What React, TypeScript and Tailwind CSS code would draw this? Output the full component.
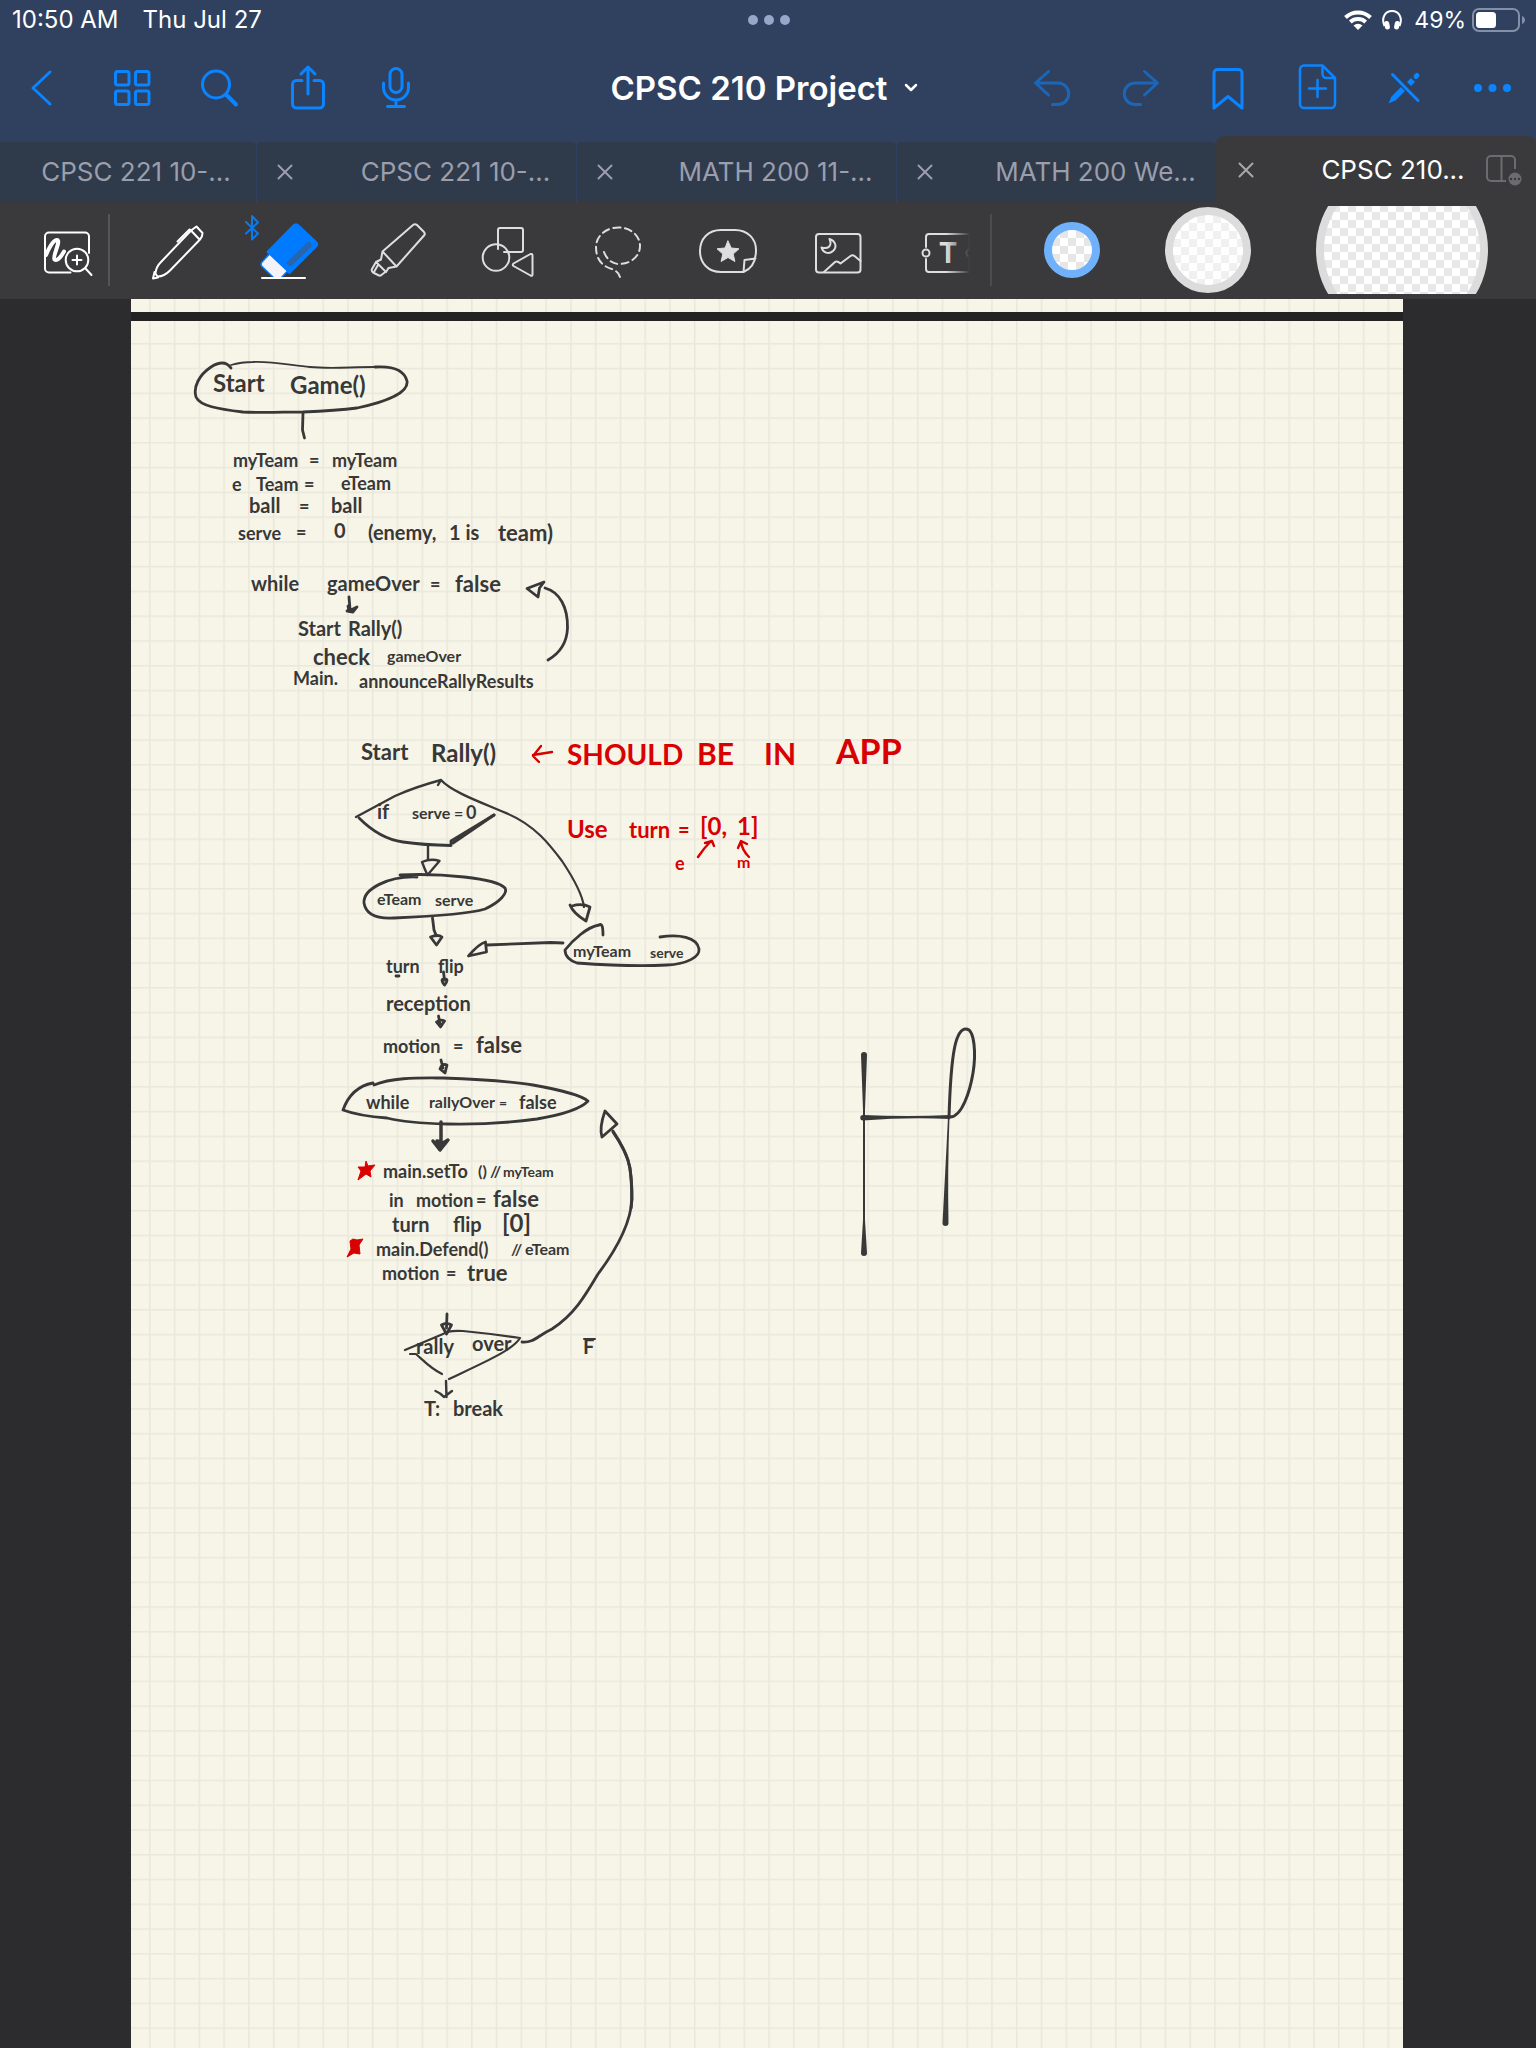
import React from 'react';

type IconProps = { children: React.ReactNode; width?: number };

function BarIcon({ children, width = 3 }: IconProps) {
  return (
    <svg
      viewBox="0 0 48 48"
      className="size-12"
      fill="none"
      stroke="currentColor"
      strokeWidth={width}
      strokeLinecap="round"
      strokeLinejoin="round"
      aria-hidden="true"
    >
      {children}
    </svg>
  );
}

function BarButton({ label, dim, children }: { label: string; dim?: boolean; children: React.ReactNode }) {
  return (
    <button
      type="button"
      aria-label={label}
      className={
        dim
          ? 'flex h-24 w-[88px] items-center justify-center text-[#1c66b8]'
          : 'flex h-24 w-[88px] items-center justify-center text-[#0a84ff]'
      }
    >
      {children}
    </button>
  );
}

function Tool({ label, bright, children }: { label: string; bright?: boolean; children: React.ReactNode }) {
  return (
    <button
      type="button"
      aria-label={label}
      className={
        bright
          ? 'flex w-[110px] shrink-0 items-center justify-center text-white'
          : 'flex w-[110px] shrink-0 items-center justify-center text-[#dedede]'
      }
    >
      <svg
        viewBox="0 0 64 64"
        className="size-16 overflow-visible"
        fill="none"
        stroke="currentColor"
        strokeWidth={2}
        strokeLinecap="round"
        strokeLinejoin="round"
        aria-hidden="true"
      >
        {children}
      </svg>
    </button>
  );
}

function StatusBar() {
  return (
    <div className="grid h-10 grid-cols-[1fr_auto_1fr] items-center pr-2.5 pl-3 text-2xl leading-7 text-white">
      <div className="flex gap-6">
        <span>10:50 AM</span>
        <span>Thu Jul 27</span>
      </div>
      <button type="button" aria-label="Multitasking" className="flex gap-1.5">
        <span className="size-2.5 rounded-full bg-[#97a7ca]" />
        <span className="size-2.5 rounded-full bg-[#97a7ca]" />
        <span className="size-2.5 rounded-full bg-[#97a7ca]" />
      </button>
      <div className="flex items-center justify-end">
        <svg viewBox="0 0 28 20" className="mr-2.5 h-5 w-7" fill="none" stroke="white" strokeWidth={4} aria-label="Wi-Fi">
          <path d="M1.5 7.5a18 18 0 0 1 25 0M6.300 12a11.500 11.500 0 0 1 15.400 0" />
          <path d="M14 20l-4.500-4.500a6.500 6.500 0 0 1 9 0Z" fill="white" stroke="none" />
        </svg>
        <svg viewBox="0 0 20 20" className="mr-3 size-5" fill="none" stroke="white" strokeWidth={2} aria-label="Headphones">
          <path d="M2.500 16C-1 8 3 1 10 1s11 7 7.500 15" />
          <rect x="2.500" y="11" width="5" height="8.500" rx="2.500" fill="white" stroke="none" transform="rotate(-12 5 15)" />
          <rect x="12.500" y="11" width="5" height="8.500" rx="2.500" fill="white" stroke="none" transform="rotate(12 15 15)" />
        </svg>
        <span className="mr-1.5 text-[23px]">49%</span>
        <svg viewBox="0 0 54 24" className="h-6 w-[54px]" aria-label="Battery">
          <rect x="1" y="1" width="46" height="22" rx="6" fill="none" stroke="#8390a8" strokeWidth={2} />
          <rect x="4" y="4" width="20" height="16" rx="3.500" fill="white" />
          <path d="M50 8c4 1.500 4 6.500 0 8Z" fill="#8390a8" />
        </svg>
      </div>
    </div>
  );
}

function NavBar() {
  return (
    <div className="grid h-24 grid-cols-[1fr_auto_1fr] items-center">
      <div className="flex">
        <BarButton label="Back">
          <BarIcon>
            <path d="M30 8 13 24l17 16" />
          </BarIcon>
        </BarButton>
        <BarButton label="Pages">
          <BarIcon>
            <rect x="7.500" y="7.500" width="13.500" height="13.500" rx="2" />
            <rect x="27.500" y="7.500" width="13.500" height="13.500" rx="2" />
            <rect x="7.500" y="27" width="13.500" height="13.500" rx="2" />
            <rect x="27.500" y="27" width="13.500" height="13.500" rx="2" />
          </BarIcon>
        </BarButton>
        <BarButton label="Search">
          <BarIcon>
            <circle cx="20" cy="20.500" r="13.500" />
            <path d="m30.500 31 9.500 9.500" strokeWidth={4} />
          </BarIcon>
        </BarButton>
        <BarButton label="Share">
          <BarIcon>
            <path d="M18 16.500h-5.500a4 4 0 0 0-4 4V40a4 4 0 0 0 4 4h23a4 4 0 0 0 4-4V20.500a4 4 0 0 0-4-4H30M24 30V3.500M17 10l7-7 7 7" />
          </BarIcon>
        </BarButton>
        <BarButton label="Record">
          <BarIcon>
            <rect x="18" y="4.500" width="12" height="24" rx="6" />
            <path d="M11.500 19v4.500a12.500 12.500 0 0 0 25 0V19M24 36.500v6M15.500 42.500h17" />
          </BarIcon>
        </BarButton>
      </div>
      <h1>
        <button type="button" className="mr-2 flex items-center gap-4 text-[33px] leading-10 font-semibold text-white">
          <span className="whitespace-nowrap">CPSC 210 Project</span>
          <svg viewBox="0 0 14 10" className="h-2.5 w-3.5" fill="none" stroke="white" strokeWidth={2.500} strokeLinecap="round" strokeLinejoin="round" aria-hidden="true">
            <path d="m2 2 5 5 5-5" />
          </svg>
        </button>
      </h1>
      <div className="flex justify-end">
        <BarButton label="Undo" dim>
          <BarIcon>
            <path d="M20.500 7.500 7.500 19l13 12M7.500 19H30a10.700 10.700 0 0 1 0 21.500h-5.500" />
          </BarIcon>
        </BarButton>
        <BarButton label="Redo" dim>
          <BarIcon>
            <path d="M28.500 7.500 41.500 19l-13 12M41.500 19H19a10.700 10.700 0 0 0 0 21.500h5.500" />
          </BarIcon>
        </BarButton>
        <BarButton label="Bookmark">
          <BarIcon>
            <path d="M10 44V9a3.500 3.500 0 0 1 3.500-3.500h21A3.500 3.500 0 0 1 38 9v35L24 32.500Z" />
          </BarIcon>
        </BarButton>
        <BarButton label="Add page">
          <BarIcon width={2.500}>
            <path d="M30.500 1.500H12a4 4 0 0 0-4 4V40a4 4 0 0 0 4 4h27a4 4 0 0 0 4-4V14Zm0 0V10a4 4 0 0 0 4 4H43M25.500 16v17M17 24.500h17" />
          </BarIcon>
        </BarButton>
        <BarButton label="Toggle read only">
          <BarIcon>
            <path d="m12.500 10.500 25.500 26" />
            <path d="m8.500 39.500 3-7 9.500-9.500 4 4-9.500 9.500ZM27 18l4-4 4 4-4 4Z" fill="currentColor" stroke="none" />
            <path d="m36 12.500 1-1" strokeWidth={5} />
          </BarIcon>
        </BarButton>
        <BarButton label="More">
          <BarIcon>
            <g fill="currentColor" stroke="none">
              <circle cx="10" cy="24" r="4" />
              <circle cx="24.500" cy="24" r="4" />
              <circle cx="39" cy="24" r="4" />
            </g>
          </BarIcon>
        </BarButton>
      </div>
    </div>
  );
}

function CloseIcon() {
  return (
    <svg viewBox="0 0 16 16" className="size-4" stroke="currentColor" strokeWidth={2} strokeLinecap="round" aria-hidden="true">
      <path d="m1.500 1.500 13 13m0-13-13 13" />
    </svg>
  );
}

function Tab({ title }: { title: string }) {
  return (
    <div className="mt-1.5 flex h-[60px] min-w-0 items-center rounded-t border-l border-[#30405f] bg-[#2f3a4b] text-[#9a9ead]">
      <button type="button" aria-label={'Close ' + title} className="ml-[18px] flex h-8 w-5 items-center justify-center">
        <CloseIcon />
      </button>
      <button type="button" className="min-w-0 flex-1 pl-10 text-center text-[26px] leading-8 whitespace-nowrap">
        {title}
      </button>
    </div>
  );
}

function TabBar() {
  return (
    <nav aria-label="Open documents" className="grid grid-cols-[4fr_5fr_5fr_5fr_5fr] bg-[#30405f]">
      <div className="mt-1.5 flex h-[60px] min-w-0 items-center justify-center rounded-tr bg-[#2f3a4b] text-[#9a9ead]">
        <button type="button" className="pl-4 text-[26px] leading-8 whitespace-nowrap">
          CPSC 221 10-...
        </button>
      </div>
      <Tab title="CPSC 221 10-..." />
      <Tab title="MATH 200 11-..." />
      <Tab title="MATH 200 We..." />
      <div className="flex h-[66px] min-w-0 items-center rounded-t-lg bg-[#3a3a3c] pt-0.5 text-[#a8a8ac]">
        <button type="button" aria-label="Close CPSC 210" className="ml-5 flex h-8 w-5 items-center justify-center">
          <CloseIcon />
        </button>
        <button type="button" className="min-w-0 flex-1 pl-11 text-center text-[26px] leading-8 whitespace-nowrap text-white">
          CPSC 210...
        </button>
        <button type="button" aria-label="Split view" className="mr-3.5 text-[#6c6c70]">
          <svg viewBox="0 0 36 32" className="h-8 w-9" fill="none" stroke="currentColor" strokeWidth={2} aria-hidden="true">
            <path d="M20 27H5a4 4 0 0 1-4-4V6a4 4 0 0 1 4-4h20a4 4 0 0 1 4 4v9M15.500 2v25" />
            <circle cx="29" cy="25" r="6.500" fill="currentColor" stroke="none" />
            <g fill="#3a3a3c" stroke="none">
              <circle cx="25" cy="25" r="1.200" />
              <circle cx="29" cy="25" r="1.200" />
              <circle cx="33" cy="25" r="1.200" />
            </g>
          </svg>
        </button>
      </div>
    </nav>
  );
}

function ToolBar() {
  return (
    <div className="flex h-[97px] items-stretch bg-[#3a3a3c] pb-0.5" role="toolbar" aria-label="Drawing tools">
      <div className="-mr-14 ml-3 flex">
        <Tool label="Zoom window" bright>
          <path d="M54 35V18.500a4 4 0 0 0-4-4H14a4 4 0 0 0-4 4v32a4 4 0 0 0 4 4h21.500" />
          <path d="M11 37c3-7 7-15 11-15 4.500 0-5 17-2.500 19.500 2.500 2 6-2 9.500-8" strokeWidth={4} />
          <circle cx="42" cy="42" r="11.300" />
          <path d="M42 37.500v9M37.500 42h9M50.500 50.500l6 6.500" />
        </Tool>
      </div>
      <span className="ml-[42px] h-[72px] w-0.5 shrink-0 self-center bg-[#555557]" />
      <div className="relative flex min-w-0 flex-1 overflow-hidden pl-[13px]">
        <Tool label="Pen" bright>
          <path d="M7 60.500 8.500 54l3.500 5.500ZM9.500 55c.5-4 2-7.500 5-10.500L45 12.500l5.500-4 6 6.500c0 3-.5 4.500-2.500 6.500L24 52.500c-3.500 3.500-8 6-12 6M45 12.500l8.500 9" />
          <path d="M31.500 23.500 43.500 11.500l2 1" />
        </Tool>
        <Tool label="Eraser" bright>
          <path d="M11.500 34 37 8q3-3.500 6 0l17 16q2.500 2 0 4.500L33.500 55Z" fill="#007aff" stroke="#007aff" />
          <path d="m13.500 36 18 17-6.500 7h-7L6 48.500q-2-2 0-4.500Z" fill="#f2f2f7" stroke="#007aff" strokeWidth={1.500} />
          <path d="m30 45 20.500-20q2-2 4 0t0 4.500L36 47.500q-2.500 1-3 0Z" fill="#2865ac" stroke="none" />
          <path d="M6 60h43" />
          <path d="M-10 4 2 15.500l-6 6V-2l6 6.500-12 11" stroke="#0a7aee" />
        </Tool>
        <Tool label="Highlighter">
          <path d="M16.500 33.500 47 7q2-1.500 4 0l7 7q1.500 2 0 3.500L30.500 48.500ZM16.500 33.500l-1.500 8-5 2.500 10 10 2.500-4 8-1.500M10 44l-4 7q-1 2 1 3.500l6 3q2 .5 3-1l4-3M12 47l-4 7" />
        </Tool>
        <Tool label="Shapes">
          <circle cx="20" cy="39.500" r="13.300" />
          <path d="M22 31V12q0-2 2-2h21q2 0 2 2v20q0 2-2 2H28M37.500 45.500l17-9.500q2-.5 2 1.500v19q0 2-2 1l-17-9.500q-1.500-1.500 0-2.500Z" />
        </Tool>
        <Tool label="Lasso">
          <path d="M18 34c3 8 9 12 15 12 12 0 21-8 21-18S45 9.500 32.500 9.500 10 18 10 29c0 10 4 16 10 19.500 5 3 12 3 14 10.500" strokeDasharray="7 4.500" />
        </Tool>
        <Tool label="Elements">
          <path d="M47.500 54H25C12 54 4 45 4 33S12 12 25 12h14c13 0 21 9 21 20 0 12-5 19-12.500 22l1-12 11-1.500" />
          <path d="m32 23 3.200 7 7.800.8-5.800 5.200 1.700 7.500-6.900-4-6.900 4 1.700-7.500-5.800-5.200 7.800-.8Z" fill="currentColor" strokeWidth={1} />
        </Tool>
        <Tool label="Image">
          <rect x="10" y="16" width="44.500" height="38.500" rx="3" />
          <path d="m18 54 11-10q2-1.500 5.500 1.500l10-7.500q2-1.500 4 0l6 5" />
          <path d="M23.500 21c6 2 8 8 3.500 12s-10 1.500-11.500-3.500c7 2 11-2 8-8.500Z" />
        </Tool>
        <Tool label="Text">
          <path d="M10 29V19a3 3 0 0 1 3-3h40.500v14M10 41v10a3 3 0 0 0 3 3h40.500V41" />
          <circle cx="10" cy="35" r="3.500" />
          <circle cx="54" cy="35" r="3.500" />
          <text x="32" y="45" textAnchor="middle" fill="currentColor" stroke="none" fontSize="28" fontWeight="700">
            T
          </text>
        </Tool>
        <span className="pointer-events-none absolute inset-y-0 right-0 w-6 bg-linear-to-r from-transparent to-[#3a3a3c]" />
      </div>
      <span className="ml-5 h-[72px] w-0.5 shrink-0 self-center bg-[#4c4c4e]" />
      <div className="flex w-[544px] shrink-0 items-center gap-[65px] pl-[52px]" role="group" aria-label="Eraser size">
        <button type="button" aria-label="Small" aria-pressed="true" className="size-14 rounded-full border-8 border-[#6fb1fb] bg-[repeating-conic-gradient(#e6e6e6_0_25%,#ffffff_0_50%)] bg-[length:16px_16px]" />
        <button type="button" aria-label="Medium" className="size-[86px] rounded-full border-8 border-[#dcdcdc] bg-[repeating-conic-gradient(#f0f0f0_0_25%,#ffffff_0_50%)] bg-[length:16px_16px]" />
        <button type="button" aria-label="Large" className="flex h-[88px] w-[172px] items-center overflow-hidden">
          <span className="block size-[172px] shrink-0 rounded-full border-8 border-[#dcdcdc] bg-[repeating-conic-gradient(#e8e8e8_0_25%,#ffffff_0_50%)] bg-[length:16px_16px]" />
        </button>
      </div>
    </div>
  );
}

function GridPaper({ id, top }: { id: string; top: number }) {
  return (
    <svg className="absolute inset-0 h-full w-full" aria-hidden="true">
      <defs>
        <pattern id={id} x="18" y={top} width="24.770" height="24.770" patternUnits="userSpaceOnUse">
          <path d="M.8 0V24.770M0 .8H24.770" stroke="#eae8dc" strokeWidth="1.600" />
        </pattern>
      </defs>
      <rect width="100%" height="100%" fill={'url(#' + id + ')'} />
    </svg>
  );
}

type Word = [x: number, baseline: number, size: number, text: string];

const INK_WORDS: Word[] = [
  [213, 392, 24, 'Start'],
  [290, 394, 24, 'Game()'],
  [233, 467, 18, 'myTeam'],
  [309, 467, 18, '='],
  [332, 467, 18, 'myTeam'],
  [232, 491, 18, 'e'],
  [256, 491, 18, 'Team'],
  [304, 491, 18, '='],
  [341, 490, 18, 'eTeam'],
  [249, 513, 20, 'ball'],
  [299, 513, 18, '='],
  [331, 513, 20, 'ball'],
  [238, 540, 18, 'serve'],
  [296, 539, 18, '='],
  [334, 538, 20, '0'],
  [368, 540, 20, '(enemy,'],
  [449, 540, 20, '1 is'],
  [498, 541, 22, 'team)'],
  [251, 591, 20, 'while'],
  [327, 591, 20, 'gameOver'],
  [430, 591, 18, '='],
  [455, 592, 22, 'false'],
  [298, 636, 20, 'Start'],
  [348, 636, 20, 'Rally()'],
  [313, 665, 22, 'check'],
  [387, 662, 16, 'gameOver'],
  [293, 685, 18, 'Main.'],
  [359, 688, 18, 'announceRallyResults'],
  [361, 760, 22, 'Start'],
  [431, 762, 24, 'Rally()'],
  [377, 819, 20, 'if'],
  [412, 819, 16, 'serve'],
  [454, 819, 16, '='],
  [466, 819, 18, '0'],
  [377, 905, 16, 'eTeam'],
  [435, 906, 16, 'serve'],
  [573, 957, 16, 'myTeam'],
  [650, 958, 14, 'serve'],
  [386, 973, 18, 'turn'],
  [438, 973, 18, 'flip'],
  [386, 1011, 20, 'reception'],
  [383, 1053, 18, 'motion'],
  [453, 1053, 18, '='],
  [476, 1053, 22, 'false'],
  [366, 1109, 18, 'while'],
  [429, 1108, 16, 'rallyOver'],
  [499, 1108, 14, '='],
  [519, 1109, 18, 'false'],
  [383, 1178, 18, 'main.setTo'],
  [478, 1177, 16, '()'],
  [490, 1177, 16, '//'],
  [503, 1177, 14, 'myTeam'],
  [389, 1207, 18, 'in'],
  [416, 1207, 18, 'motion'],
  [476, 1207, 18, '='],
  [493, 1207, 22, 'false'],
  [392, 1232, 20, 'turn'],
  [453, 1232, 20, 'flip'],
  [502, 1232, 24, '[0]'],
  [376, 1256, 18, 'main.Defend()'],
  [511, 1255, 16, '//'],
  [525, 1255, 16, 'eTeam'],
  [382, 1280, 18, 'motion'],
  [446, 1280, 18, '='],
  [467, 1281, 22, 'true'],
  [416, 1354, 20, 'rally'],
  [472, 1351, 20, 'over'],
  [424, 1416, 20, 'T:'],
  [453, 1416, 20, 'break'],
  [583, 1354, 20, 'F'],
];

const RED_WORDS: Word[] = [
  [567, 765, 28, 'SHOULD'],
  [697, 765, 30, 'BE'],
  [764, 765, 30, 'IN'],
  [836, 764, 34, 'APP'],
  [567, 838, 24, 'Use'],
  [629, 838, 22, 'turn'],
  [678, 837, 20, '='],
  [700, 835, 24, '[0,'],
  [737, 835, 24, '1]'],
  [675, 870, 18, 'e'],
  [737, 868, 16, 'm'],
];

function Words({ items }: { items: Word[] }) {
  return (
    <>
      {items.map(([x, y, size, text]) => (
        <text key={x + '-' + y} x={x} y={y} fontSize={size}>
          {text}
        </text>
      ))}
    </>
  );
}

function Notes() {
  return (
    <svg
      viewBox="131 321 1272 1110"
      className="relative block h-auto w-full font-['Lato','Open_Sans',sans-serif] font-bold"
      role="img"
      aria-label="Handwritten flow chart of the game loop"
    >
      <g fill="#383838">
        <Words items={INK_WORDS} />
      </g>
      <g fill="#d80000">
        <Words items={RED_WORDS} />
      </g>

      <g fill="none" stroke="#383838" strokeWidth={2.800} strokeLinecap="round" strokeLinejoin="round">
        {/* start bubble */}
        <path d="M231 368C226 361 219 362 211 367 199 375 193 387 196 397 200 406 218 409 243 412 262 413 284 412 303 412 326 411 341 410 357 408 385 402 409 393 407 381 404 369 390 366 375 367" />
        <path d="M375 367C350 367 330 369 310 367 290 365 270 361 253 362q-12 0-22 3" strokeWidth={1.800} />
        <path d="M303 413 302.500 430 304.500 438" />
        {/* game loop arrows */}
        <path d="m349 597 1 12m-2-3 1 5 8-4-4 5-6-1" />
        <path d="M548 660C560 653 567 642 567.500 628 568 608 560 592 545 588M544 582 527 588.500 538 597l1.500-9Z" />
        {/* serve decision */}
        <path d="M356 817 395 796q20-9 46-16m-3 5 3-5C452 792 480 802 506 813" strokeWidth={2.400} />
        <path d="M359 818C372 831 388 840 403 842q20 3 48 3.500V841L494 815" />
        <path d="m453 843 41-28" strokeWidth={3} />
        <path d="M506 813C535 825 550 845 562 861q20 30 22 46" strokeWidth={2.200} />
        <path d="M570 905q3 8 16 16l4-14q-8-4-18-1" />
        <path d="M428 846v14m-6 2q3 8 5.500 13l12-14Q431 858 422 862Z" strokeWidth={2.400} />
        {/* enemy serve bubble */}
        <path d="M417 877C388 876 363 889 364 903 366 915 378 919 394 918 440 916 472 913 485 909 500 902 508 893 505 888 496 878 440 873 400 875" />
        <path d="M432.500 918 434 930l2 5m-5.500 2 6 8 5.500-8q-4-3-11.500 0Z" />
        {/* team serve bubble */}
        <path d="M603 935c0-8-1-12-4-10-12 2-26 15-34 25 0 6 5 11 12 13q55 4 90 2c20-1 33-8 32-16-2-12-20-15-39-12" />
        <path d="m563 943-12-.5-64 2.500M468.500 956q10-12 17-14l1 10Z" />
        {/* step arrows */}
        <path d="M396 976h3M443.500 972l1 8m0 5q-5-6 0-6t0 6Z" />
        <path d="m438.500 1016 2 10m-4-4 4 5 4-6q-4-2-8 1" />
        <path d="m441 1060 2 8m-3 1 5 4 2-8q-5-2-7 4" />
        {/* rally loop bubble */}
        <path d="M374 1085C393 1077 420 1078 443 1078q60 2 90 7 45 8 55 16-10 11-51 18-45 6-90 5-40-1-60-6-28-2-44-8c5-14 14-24 30-27" />
        <path d="M441 1122v22m-8-3 7 9 8-10-5 3-6-2 3 5 4-3" strokeWidth={3.500} />
        {/* loop back */}
        <path d="M522 1342c12 1 15-6 30-13 22-14 33-33 46-55 24-32 33-55 34-75 0-35-4-45-19-68" />
        <path d="M613 1132q14 20 17 36 3 25 1 40" strokeWidth={3} />
        <path d="M602 1137q-3-9 3-26l12 13Z" />
        {/* rally over decision */}
        <path d="m447 1314-.5 14m-5-3 5 9 5-9q-5-3-10 0Z" />
        <path d="M405 1350 443 1334q5-4 20-3 30 3 57 7c-7 12-35 24-71 41M410 1354h6c8 7 14 14 26 20" strokeWidth={2.200} />
        <path d="m446 1381 .5 16m-11-6q5 2 8.500 6l8-6" strokeWidth={2.400} />
        {/* bar over the false branch label */}
        <path d="M584 1339h11" strokeWidth={2} />
      </g>

      {/* doodle with tapering strokes */}
      <g fill="#383838">
        <path d="M861 1055a3 3 0 0 1 6 0L865 1110v110l2 33a3 3 0 0 1-6 0l2-33v-110Z" />
        <path d="M863 1115q45 2 87 0v4q-42-2-87 1.500a2.500 2.500 0 0 1 0-5.500Z" />
        <path d="M948 1117q-3 60-5.500 106a3 3 0 0 0 6 0q-1-55 1-106Z" />
      </g>
      <path d="M949 1118C951 1050 956 1029 966 1029c9 0 10 26 7 44s-11 44-23 44" fill="none" stroke="#383838" strokeWidth={3} strokeLinecap="round" />

      <g fill="none" stroke="#d80000" strokeWidth={2.400} strokeLinecap="round" strokeLinejoin="round">
        <path d="m552 752-19 3m8-9-8 10 6 6" />
        <path d="M698 857q6-9 13-16m-6 2 7-2 2 5M749 857q-7-7-8-15m-3 6 3-7 6 3" />
      </g>
      <g fill="#d80000" stroke="#d80000" strokeLinejoin="round">
        <path d="m366 1161 2 5 7-1-5 6 1 6-5-3-8 6 3-9-3-4 7 0Z" />
        <path d="m353 1239 4 1 6-1-4 6 1 9-6-1-7 4 4-8-1-8Z" />
      </g>
    </svg>
  );
}

export default function App() {
  return (
    <div className="flex min-h-screen flex-col bg-[#2c2c2e] font-['Inter','Roboto',sans-serif]">
      <header className="bg-[#30405f]">
        <StatusBar />
        <NavBar />
        <TabBar />
        <ToolBar />
      </header>
      <main className="mr-[133px] ml-[131px] flex flex-1 flex-col bg-[#232324]">
        <section aria-label="Previous page" className="relative h-[13px] bg-[#f7f5e8]">
          <GridPaper id="grid-previous" top={16} />
        </section>
        <section aria-label="Current page" className="relative mt-[9px] flex-1 bg-[#f7f5e8]">
          <GridPaper id="grid-current" top={22} />
          <Notes />
        </section>
      </main>
    </div>
  );
}
